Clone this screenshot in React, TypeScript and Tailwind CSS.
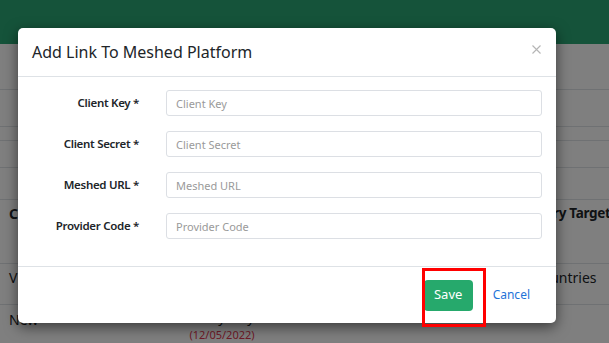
import React from "react";

const font = { fontFamily: '"Noto Sans", "Open Sans", sans-serif' };

function Field({ label, placeholder }: { label: string; placeholder: string }) {
  return (
    <div className="flex items-center h-[26px]">
      <label className="w-[107px] text-right text-[11.5px] font-semibold tracking-[-0.3px] text-[#212529] leading-none">
        {label}
      </label>
      <div className="ml-[27px] flex-1 h-[26px]">
        <input
          placeholder={placeholder}
          className="block w-full h-[26px] rounded-[3px] border border-[#dcdfe4] px-[9px] text-[11px] text-[#212529] placeholder:text-[#9a9a9a] outline-none"
          style={font}
        />
      </div>
    </div>
  );
}

export default function App() {
  return (
    <div className="relative w-[609px] h-[343px] overflow-hidden bg-white" style={font}>
      {/* background page */}
      <div className="flex flex-col">
        <div className="h-[44px] bg-[#2aa674]" />
        <div className="h-[46px] border-b border-[#dee2e6]" />
        <div className="h-[37px] border-b border-[#dee2e6]" />
        <div className="h-[14px] border-b border-[#dee2e6]" />
        <div className="h-[27px] border-b border-[#dee2e6]" />
        <div className="h-[32px] border-b border-[#dee2e6]" />
        <div className="h-[64px] border-b border-[#dee2e6] flex text-[14px] font-bold text-[#212529] pt-[3px]">
          <div className="w-[147px] pl-[9px]">Campaign</div>
          <div className="w-[150px] text-center">Schedule</div>
          <div className="flex-1" />
          <div className="w-[96px] whitespace-nowrap text-right pr-[2px] text-[13.5px] tracking-[-0.3px]">Delivery Target</div>
        </div>
        <div className="h-[41px] border-b border-[#dee2e6] flex text-[14px] text-[#212529] pt-[3px]">
          <div className="w-[147px] pl-[9px]">Vision</div>
          <div className="w-[150px] text-center">Monthly</div>
          <div className="flex-1" />
          <div className="w-[96px] whitespace-nowrap overflow-hidden">All Countries</div>
        </div>
        <div className="flex text-[14px] text-[#212529] pt-[4px]">
          <div className="w-[147px] pl-[9px]">New</div>
          <div className="w-[150px] text-center flex flex-col leading-[16px]">
            <span>Every Day</span>
            <span className="text-[11px] text-[#e0354f] mt-[2px]">(12/05/2022)</span>
          </div>
          <div className="flex-1" />
        </div>
      </div>

      {/* backdrop */}
      <div className="absolute inset-0 bg-black/50" />

      {/* modal */}
      <div className="absolute left-[18px] top-[28px] w-[538px] h-[295px] bg-white rounded-[5px] shadow-[0_4px_14px_rgba(0,0,0,0.55)] flex flex-col">
        <div className="h-[49px] border-b border-[#dee2e6] flex items-center px-[14px]">
          <h5 className="text-[16px] text-[#212529] leading-none -mt-[1px]">Add Link To Meshed Platform</h5>
          <button className="ml-auto mr-[1px] -mt-[5px]">
            <svg width="9" height="9" viewBox="0 0 9 9">
              <path d="M0.5 0.5 L8.5 8.5 M8.5 0.5 L0.5 8.5" stroke="#b5b5b5" strokeWidth="1.1" />
            </svg>
          </button>
        </div>
        <div className="flex flex-col gap-[15px] px-[14px] pt-[13px] pb-[27px] border-b border-[#dee2e6]">
          <Field label="Client Key *" placeholder="Client Key" />
          <Field label="Client Secret *" placeholder="Client Secret" />
          <Field label="Meshed URL *" placeholder="Meshed URL" />
          <Field label="Provider Code *" placeholder="Provider Code" />
        </div>
        <div className="flex-1 flex items-center justify-end px-[14px] gap-[8px]">
          <button className="h-[31px] w-[49px] rounded-[4px] bg-[#26a96c] text-white text-[13px]">Save</button>
          <button className="h-[31px] px-[12px] text-[12px] text-[#1e73d8]">Cancel</button>
        </div>
      </div>

      {/* annotation */}
      <div className="absolute left-[422px] top-[268px] w-[64px] h-[59px] border-[3px] border-[#ff0000]" />
    </div>
  );
}
